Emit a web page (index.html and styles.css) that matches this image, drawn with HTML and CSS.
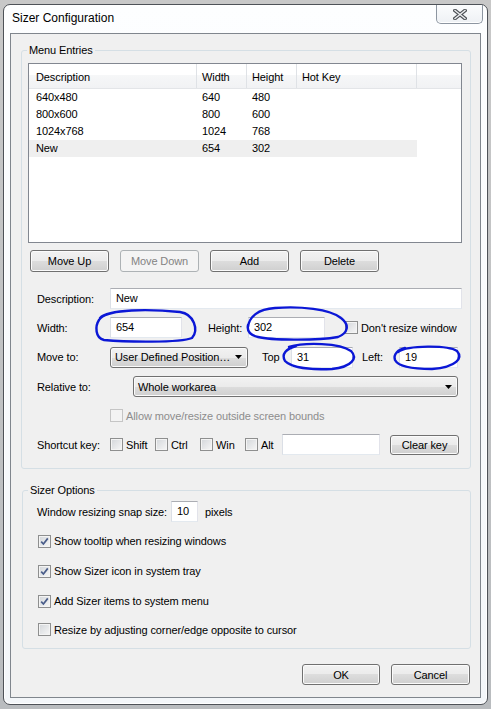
FILE: index.html
```html
<!DOCTYPE html>
<html>
<head>
<meta charset="utf-8">
<title>Sizer Configuration</title>
<link rel="stylesheet" href="styles.css">
</head>
<body>
<div class="window">
  <div class="titlebar">
    <span class="title">Sizer Configuration</span>
    <div class="close">
      <svg width="14" height="11" viewBox="0 0 14 11">
        <path d="M2 1.5 L12 9.5 M12 1.5 L2 9.5" stroke="#4e5257" stroke-width="3.6" stroke-linecap="square" fill="none"/>
        <path d="M2 1.5 L12 9.5 M12 1.5 L2 9.5" stroke="#eef0f2" stroke-width="1.4" stroke-linecap="square" fill="none"/>
      </svg>
    </div>
  </div>
  <div class="client">
    <fieldset class="group g1">
      <legend>Menu Entries</legend>
      <div class="gbody g1body">
        <div class="list">
          <div class="lhead">
            <div class="c1">Description</div>
            <div class="c2">Width</div>
            <div class="c3">Height</div>
            <div class="c4">Hot Key</div>
            <div class="cf"></div>
          </div>
          <div class="lrow"><div class="c1">640x480</div><div class="c2">640</div><div class="c3">480</div><div class="c4"></div></div>
          <div class="lrow"><div class="c1">800x600</div><div class="c2">800</div><div class="c3">600</div><div class="c4"></div></div>
          <div class="lrow"><div class="c1">1024x768</div><div class="c2">1024</div><div class="c3">768</div><div class="c4"></div></div>
          <div class="lrow sel"><div class="c1">New</div><div class="c2">654</div><div class="c3">302</div><div class="c4"></div></div>
        </div>
        <div class="btnrow">
          <div class="btn w79">Move Up</div>
          <div class="btn w79 disabled">Move Down</div>
          <div class="btn w79">Add</div>
          <div class="btn w79">Delete</div>
        </div>
        <div class="form">
          <div class="frow">
            <span class="lbl">Description:</span>
            <div class="tb grow">New</div>
          </div>
          <div class="frow">
            <span class="lbl">Width:</span>
            <div class="tb w-width">654</div>
            <span class="lbl-height">Height:</span>
            <div class="tb w-height">302</div>
            <span class="cb ml-dont"></span><span>Don't resize window</span>
          </div>
          <div class="frow tall">
            <span class="lbl">Move to:</span>
            <div class="combo w-move"><span>User Defined Position…</span><svg class="arrow" width="7" height="4" viewBox="0 0 7 4"><polygon points="0,0 7,0 3.5,4" fill="#000"/></svg></div>
            <span class="lbl-top">Top</span>
            <div class="tb w-top">31</div>
            <span class="lbl-left">Left:</span>
            <div class="tb w-left">19</div>
          </div>
          <div class="frow">
            <span class="lbl lbl-rel">Relative to:</span>
            <div class="combo w-rel"><span>Whole workarea</span><svg class="arrow" width="7" height="4" viewBox="0 0 7 4"><polygon points="0,0 7,0 3.5,4" fill="#000"/></svg></div>
          </div>
          <div class="frow indent">
            <span class="cb dis"></span><span class="distext">Allow move/resize outside screen bounds</span>
          </div>
          <div class="frow">
            <span class="lbl">Shortcut key:</span>
            <span class="ck w45"><span class="cb"></span>Shift</span>
            <span class="ck w45"><span class="cb"></span>Ctrl</span>
            <span class="ck w45"><span class="cb"></span>Win</span>
            <span class="ck w37"><span class="cb"></span>Alt</span>
            <div class="tb w-key"></div>
            <div class="btn clear">Clear key</div>
          </div>
        </div>
      </div>
    </fieldset>

    <fieldset class="group g2">
      <legend>Sizer Options</legend>
      <div class="gbody g2body">
        <div class="snap">
          <span class="lbl-snap">Window resizing snap size:</span>
          <div class="tb w-snap">10</div>
          <span class="px">pixels</span>
        </div>
        <div class="crow"><span class="cb on"><svg width="11" height="11" viewBox="0 0 11 11"><path d="M2.2 5.6 L4.4 8 L8.8 2.4" stroke="#4a5d8a" stroke-width="1.7" fill="none"/></svg></span>Show tooltip when resizing windows</div>
        <div class="crow"><span class="cb on"><svg width="11" height="11" viewBox="0 0 11 11"><path d="M2.2 5.6 L4.4 8 L8.8 2.4" stroke="#4a5d8a" stroke-width="1.7" fill="none"/></svg></span>Show Sizer icon in system tray</div>
        <div class="crow"><span class="cb on"><svg width="11" height="11" viewBox="0 0 11 11"><path d="M2.2 5.6 L4.4 8 L8.8 2.4" stroke="#4a5d8a" stroke-width="1.7" fill="none"/></svg></span>Add Sizer items to system menu</div>
        <div class="crow last"><span class="cb"></span>Resize by adjusting corner/edge opposite to cursor</div>
      </div>
    </fieldset>

    <div class="dlgbtns">
      <div class="btn w78">OK</div>
      <div class="btn w79">Cancel</div>
    </div>
  </div>
</div>

<svg class="ink" width="491" height="709" viewBox="0 0 491 709">
  <g fill="none" stroke="#0b17d6" stroke-width="2.4" stroke-linecap="round" stroke-linejoin="round">
    <path d="M100 318 C108 309, 150 309, 180 312 C194 314, 199 330, 192 338 C180 343, 125 342, 104 340 C95 338, 95 326, 99 320 C102 315, 112 312, 126 311"/>
    <path d="M248 327 C249 317, 258 309, 275 308 C300 306, 330 309, 341 318 C350 325, 348 333, 338 337 C315 341, 270 340, 258 337 C249 335, 247 330, 248 325"/>
    <path d="M289 347 C305 342, 340 343, 351 351 C358 358, 352 367, 332 369 C312 370, 292 368, 285 361 C281 354, 286 349, 296 346"/>
    <path d="M398 352 C408 345, 448 345, 457 351 C463 358, 457 367, 432 369 C412 369, 398 366, 395 360 C393 354, 398 350, 405 348"/>
  </g>
</svg>
</body>
</html>
```

FILE: styles.css
```css
* { box-sizing: border-box; }
html, body { margin: 0; padding: 0; }
body {
  width: 491px;
  height: 709px;
  overflow: hidden;
  position: relative;
  background: linear-gradient(#c8c8c8, #b9bcbf);
  font-family: "Liberation Sans", Arial, sans-serif;
  font-size: 11px;
  letter-spacing: -0.1px;
  color: #000;
  white-space: nowrap;
}

.window {
  margin: 4px 0 0 3px;
  width: 485px;
  height: 701px;
  border: 1px solid #4e5258;
  border-radius: 7px;
  background: linear-gradient(#fdfeff, #f3f6f9);
  box-shadow: inset 0 0 0 1px #ffffff;
  display: flex;
  flex-direction: column;
  padding: 0 6px 6px 6px;
}

.titlebar {
  height: 28px;
  display: flex;
  justify-content: space-between;
  align-items: flex-start;
  flex-shrink: 0;
}
.title {
  font-size: 12px;
  letter-spacing: 0;
  line-height: 15px;
  margin: 6px 0 0 2px;
}
.close {
  width: 47px;
  height: 19px;
  margin-right: -2px;
  border: 1px solid #8d96a1;
  border-top: none;
  border-radius: 0 0 5px 5px;
  background: linear-gradient(#fbfcfd, #eef1f4);
  box-shadow: inset 0 -1px 0 #ffffff;
  display: flex;
  align-items: center;
  justify-content: center;
  padding-top: 1px;
}

.client {
  flex: 1;
  border: 1px solid #80868d;
  background: #f0f0f0;
  display: flex;
  flex-direction: column;
}

.group {
  padding: 0;
  border: 1px solid #d5dfe5;
  border-radius: 3px;
  min-width: 0;
}
.group legend {
  padding: 0 2px;
  margin-left: 5px;
  line-height: 13px;
  font-size: 11px;
}
.g1 { margin: 10px 9px 0 10px; }
.g2 { margin: 15px 9px 0 11px; }

.g1body { padding: 6px 8px 9px 6px; }

/* list view */
.list {
  height: 180px;
  border: 1px solid #828790;
  background: #fff;
}
.lhead {
  display: flex;
  height: 25px;
  border-bottom: 1px solid #e3e5e8;
  background: linear-gradient(#ffffff 0%, #ffffff 45%, #f6f7f8 45%, #f1f2f4 100%);
}
.lhead > div {
  display: flex;
  align-items: center;
  padding-top: 1px;
  border-right: 1px solid #dfe2e6;
}
.lhead .cf { flex: 1; border-right: none; }
.c1 { width: 168px; padding-left: 7px; flex-shrink: 0; }
.c2 { width: 50px; padding-left: 5px; flex-shrink: 0; }
.c3 { width: 50px; padding-left: 5px; flex-shrink: 0; }
.c4 { width: 120px; padding-left: 5px; flex-shrink: 0; }
.lrow {
  display: flex;
  width: 388px;
  height: 17px;
  line-height: 17px;
}
.lrow.sel { background: #efefef; }

/* buttons */
.btn {
  height: 22px;
  border: 1px solid #707070;
  border-radius: 3px;
  background: linear-gradient(#f2f2f2 0%, #ebebeb 50%, #dddddd 50%, #cfcfcf 100%);
  box-shadow: inset 0 0 0 1px #fbfbfb;
  display: flex;
  align-items: center;
  justify-content: center;
  flex-shrink: 0;
}
.btn.disabled {
  border-color: #adb2b5;
  background: #f4f4f4;
  box-shadow: none;
  color: #838383;
}
.w79 { width: 79px; }
.w78 { width: 78px; }
.btnrow {
  display: flex;
  gap: 11px;
  margin: 7px 0 0 2px;
}

/* form */
.form { margin-top: 12px; }
.frow {
  display: flex;
  align-items: center;
  height: 29px;
  padding-left: 9px;
}
.frow.tall { height: 30px; }
.frow.indent { padding-left: 82px; }
.lbl { width: 73px; flex-shrink: 0; }
.lbl-rel { width: 96px; }

.tb {
  height: 21px;
  background: #fff;
  border: 1px solid;
  border-color: #abadb3 #e2e3ea #e3e9ef #dbdfe6;
  padding-left: 5px;
  line-height: 19px;
  flex-shrink: 0;
}
.tb.grow { flex: 1; }
.w-width { width: 72px; }
.lbl-height { margin-left: 26px; width: 40px; }
.w-height { width: 77px; }
.ml-dont { margin-left: 20px; }

.combo {
  height: 21px;
  border: 1px solid #707070;
  border-radius: 3px;
  background: linear-gradient(#f2f2f2 0%, #ebebeb 50%, #dddddd 50%, #cfcfcf 100%);
  box-shadow: inset 0 0 0 1px #fbfbfb;
  display: flex;
  align-items: center;
  justify-content: space-between;
  padding: 0 5px 0 4px;
  flex-shrink: 0;
}
.arrow { display: block; }
.w-move { width: 138px; }
.w-rel { width: 325px; }
.lbl-top { margin-left: 14px; width: 29px; }
.w-top { width: 62px; }
.lbl-left { margin-left: 9px; width: 37px; }
.w-left { width: 59px; }

.cb {
  width: 13px;
  height: 13px;
  border: 1px solid #8e8f8f;
  background: linear-gradient(135deg, #d3d6da, #f7f7f7);
  box-shadow: inset 0 0 0 1px #f4f4f4;
  margin-right: 3px;
  flex-shrink: 0;
  display: inline-flex;
  align-items: center;
  justify-content: center;
}
.cb svg { display: block; }
.cb.dis {
  border-color: #c5c5c5;
  background: #f3f3f3;
  box-shadow: none;
}
.distext { color: #8d8d8d; }

.ck {
  display: inline-flex;
  align-items: center;
  flex-shrink: 0;
}
.w45 { width: 45px; }
.w37 { width: 37px; }
.w-key { width: 98px; }
.btn.clear { margin-left: 10px; width: 69px; height: 20px; }

/* group 2 */
.g2body { padding: 4px 8px 5px 14px; }
.snap {
  display: flex;
  align-items: center;
  height: 21px;
}
.lbl-snap { width: 134px; flex-shrink: 0; }
.w-snap { width: 27px; }
.px { margin-left: 7px; }
.crow {
  display: flex;
  align-items: center;
  height: 30px;
  padding-left: 1px;
}
.snap + .crow { margin-top: 4px; }
.crow.last { height: 27px; }

.dlgbtns {
  display: flex;
  justify-content: flex-end;
  gap: 11px;
  margin-top: 15px;
  padding-right: 10px;
}
.dlgbtns .btn { height: 21px; }

.ink {
  position: absolute;
  left: 0;
  top: 0;
  pointer-events: none;
}
```
